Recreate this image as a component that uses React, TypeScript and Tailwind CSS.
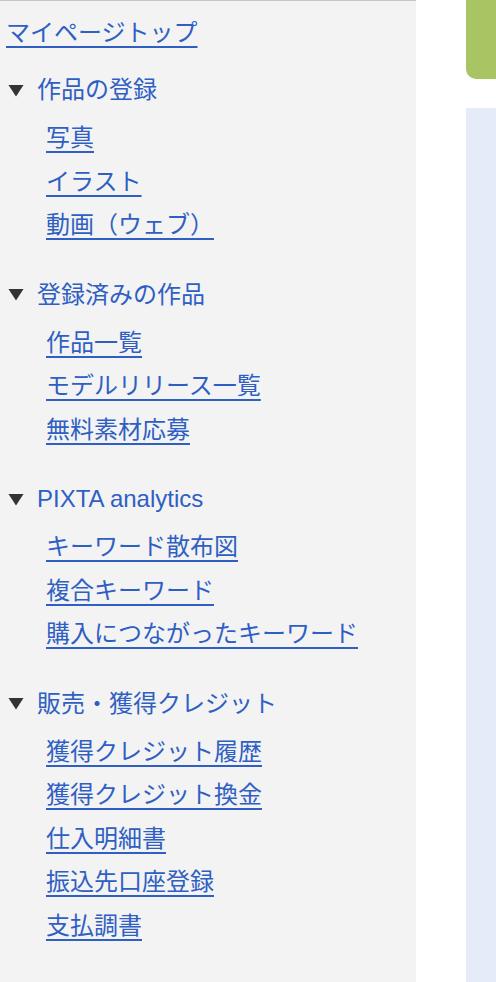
const sections = [
  { title: "作品の登録", items: ["写真", "イラスト", "動画（ウェブ）"] },
  { title: "登録済みの作品", items: ["作品一覧", "モデルリリース一覧", "無料素材応募"] },
  { title: "PIXTA analytics", items: ["キーワード散布図", "複合キーワード", "購入につながったキーワード"] },
  { title: "販売・獲得クレジット", items: ["獲得クレジット履歴", "獲得クレジット換金", "仕入明細書", "振込先口座登録", "支払調書"] },
];

function Triangle() {
  return (
    <svg width="16" height="13" viewBox="0 0 16 13" className="shrink-0">
      <polygon points="0.5,1 15.5,1 8,12.5" fill="#333333" />
    </svg>
  );
}

export default function App() {
  return (
    <div
      className="flex min-h-[982px] w-[496px] overflow-hidden bg-white text-[24px] text-[#2f5fc3]"
      style={{ fontFamily: '"Liberation Sans", "Noto Sans CJK JP", sans-serif' }}
    >
      {/* Sidebar */}
      <nav className="w-[416px] shrink-0 border-t border-[#c6c6c6] bg-[#f3f3f3] pl-[6px] pt-[10px]">
        <a href="#" className="block leading-[44px] underline decoration-2 underline-offset-[5px]">
          マイページトップ
        </a>
        <ul className="mt-[13px]">
          {sections.map((s) => (
            <li key={s.title} className="mb-[26px]">
              <div className="flex items-center gap-[13px] pl-[2px] leading-[44px]">
                <Triangle />
                <span>{s.title}</span>
              </div>
              <ul className="mt-[4px] pl-[40px]">
                {s.items.map((item) => (
                  <li key={item} className="leading-[43.5px]">
                    <a href="#" className="underline decoration-2 underline-offset-[5px]">
                      {item}
                    </a>
                  </li>
                ))}
              </ul>
            </li>
          ))}
        </ul>
      </nav>

      {/* Main */}
      <main className="ml-[50px] flex min-w-[300px] flex-col">
        <div className="h-[79px] rounded-bl-[10px] bg-[#a9c462]" />
        <div className="mt-[29px] flex-1 bg-[#e5ebf8]" />
      </main>
    </div>
  );
}
